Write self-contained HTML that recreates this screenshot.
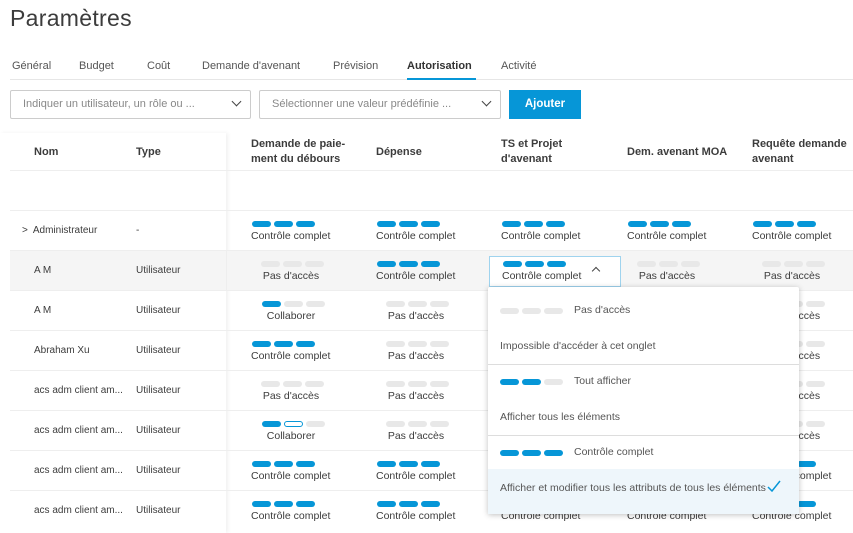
<!DOCTYPE html>
<html><head><meta charset="utf-8"><style>
*{margin:0;padding:0;box-sizing:border-box}
body{width:853px;height:529px;overflow:hidden;background:#fff;font-family:"Liberation Sans",sans-serif;color:#3c3c3c;position:relative}
.a{position:absolute;white-space:nowrap}
h1{position:absolute;left:10px;top:5px;font-weight:normal;font-size:23px;color:#3c3c3c;letter-spacing:0.3px}
.tab{position:absolute;top:60px;font-size:11px;color:#555}
.inp{position:absolute;top:90px;height:29px;border:1px solid #ccc;border-radius:2px;font-size:11px;color:#888;padding:7px 12px}
.chev{position:absolute;right:10px;top:8px;width:7px;height:7px;border-right:1.5px solid #444;border-bottom:1.5px solid #444;transform:rotate(45deg)}
.th{position:absolute;font-size:11px;font-weight:bold;color:#3c3c3c;line-height:15px}
.row{position:absolute;left:10px;width:843px;height:40px;border-top:1px solid #eee}
.nm{position:absolute;font-size:10px;color:#3c3c3c}
.c{position:absolute;width:90px;text-align:center;font-size:10.5px;color:#3c3c3c}
.p{display:inline-block;width:19px;height:6px;border-radius:3px;background:#e8e8e8;margin-right:3px;vertical-align:top}
.p.b{background:#0696d7}
.p.o{background:#fff;border:1px solid #0696d7}
.pills{height:7px;margin-bottom:2px;text-align:left}
.dd{position:absolute;left:488px;top:287px;width:311px;height:227px;background:#fff;box-shadow:0 1px 6px rgba(0,0,0,.25);border-radius:2px}
.di{position:absolute;left:12px;font-size:10.5px;color:#555}
</style></head><body>
<h1>Paramètres</h1>
<div class="tab" style="left:12px">Général</div>
<div class="tab" style="left:79px">Budget</div>
<div class="tab" style="left:147px">Coût</div>
<div class="tab" style="left:202px">Demande d'avenant</div>
<div class="tab" style="left:333px">Prévision</div>
<div class="tab" style="left:407px;font-weight:bold;color:#333">Autorisation</div>
<div class="tab" style="left:501px">Activité</div>
<div class="a" style="left:10px;top:79px;width:843px;height:1px;background:#e6e6e6"></div>
<div class="a" style="left:407px;top:78px;width:69px;height:2px;background:#0696d7"></div>
<div class="inp" style="left:10px;width:241px">Indiquer un utilisateur, un rôle ou ...<span class="chev" style="top:7px"></span></div>
<div class="inp" style="left:259px;width:242px">Sélectionner une valeur prédéfinie ...<span class="chev" style="top:7px"></span></div>
<div class="a" style="left:509px;top:90px;width:72px;height:29px;background:#0696d7;color:#fff;font-weight:bold;font-size:11.5px;text-align:center;line-height:29px">Ajouter</div>

<div class="a" style="left:0;top:133px;width:226px;height:400px;box-shadow:2px 0 4px rgba(0,0,0,.06)"></div>
<div class="th" style="left:34px;top:145px">Nom</div>
<div class="th" style="left:136px;top:145px">Type</div>
<div class="th" style="left:251px;top:137px">Demande de paie-<br>ment du débours</div>
<div class="th" style="left:376px;top:145px">Dépense</div>
<div class="th" style="left:501px;top:137px">TS et Projet<br>d'avenant</div>
<div class="th" style="left:627px;top:145px">Dem. avenant MOA</div>
<div class="th" style="left:752px;top:137px">Requête demande<br>avenant</div>

<div class="row" style="top:170px"></div>
<div class="row" style="top:210px"></div>
<div class="row" style="top:250px;background:#f5f5f5"></div>
<div class="row" style="top:290px"></div>
<div class="row" style="top:330px"></div>
<div class="row" style="top:370px"></div>
<div class="row" style="top:410px"></div>
<div class="row" style="top:450px"></div>
<div class="row" style="top:490px"></div>
<div class="a" style="left:226px;top:250px;width:1px;height:40px;background:#eee"></div>

<div class="nm" style="left:22px;top:225px">&gt;&nbsp; Administrateur</div><div class="nm" style="left:136px;top:225px">-</div>
<div class="nm" style="left:34px;top:265px">A M</div><div class="nm" style="left:136px;top:265px">Utilisateur</div>
<div class="nm" style="left:34px;top:305px">A M</div><div class="nm" style="left:136px;top:305px">Utilisateur</div>
<div class="nm" style="left:34px;top:345px">Abraham Xu</div><div class="nm" style="left:136px;top:345px">Utilisateur</div>
<div class="nm" style="left:34px;top:385px">acs adm client am...</div><div class="nm" style="left:136px;top:385px">Utilisateur</div>
<div class="nm" style="left:34px;top:425px">acs adm client am...</div><div class="nm" style="left:136px;top:425px">Utilisateur</div>
<div class="nm" style="left:34px;top:465px">acs adm client am...</div><div class="nm" style="left:136px;top:465px">Utilisateur</div>
<div class="nm" style="left:34px;top:505px">acs adm client am...</div><div class="nm" style="left:136px;top:505px">Utilisateur</div>

<div id="cells"></div>
<script>
var F='<div class="pills" style="padding-left:1px"><span class="p b"></span><span class="p b"></span><span class="p b"></span></div>Contrôle complet';
var N='<div class="pills" style="padding-left:10px"><span class="p"></span><span class="p"></span><span class="p"></span></div>Pas d\'accès';
var C='<div class="pills" style="padding-left:11px"><span class="p b"></span><span class="p"></span><span class="p"></span></div>Collaborer';
var H='<div class="pills" style="padding-left:11px"><span class="p b"></span><span class="p o"></span><span class="p"></span></div>Collaborer';
var X=[251,376,501,627,752];
var R=[[F,F,F,F,F],[N,F,null,N,N],[C,N,null,null,N],[F,N,null,null,N],[N,N,null,null,N],[H,N,null,null,N],[F,F,null,null,F],[F,F,F,F,F]];
var h='';
R.forEach(function(r,i){r.forEach(function(v,j){if(v)h+='<div class="c" style="left:'+X[j]+'px;top:'+(221+i*40)+'px;width:'+(v==F?90:80)+'px;text-align:'+(v==F?'left':'center')+'">'+v+'</div>';});});
document.getElementById('cells').innerHTML=h;
</script>
<div class="a" style="left:489px;top:256px;width:132px;height:31px;border:1px solid #9fd3ee;background:#fff"></div>
<div class="c" style="left:502px;top:261px;text-align:left"><div class="pills" style="padding-left:1px"><span class="p b"></span><span class="p b"></span><span class="p b"></span></div>Contrôle complet</div>
<div class="a" style="left:593px;top:268px;width:6px;height:6px;border-left:1.5px solid #444;border-top:1.5px solid #444;transform:rotate(45deg)"></div>

<div class="dd">
<div class="a" style="left:12px;top:21px"><span class="p"></span><span class="p"></span><span class="p"></span></div>
<div class="di" style="left:86px;top:17px">Pas d'accès</div>
<div class="di" style="top:53px">Impossible d'accéder à cet onglet</div>
<div class="a" style="left:0;top:77px;width:311px;height:1px;background:#ddd"></div>
<div class="a" style="left:12px;top:92px"><span class="p b"></span><span class="p b"></span><span class="p"></span></div>
<div class="di" style="left:86px;top:88px">Tout afficher</div>
<div class="di" style="top:124px">Afficher tous les éléments</div>
<div class="a" style="left:0;top:148px;width:311px;height:1px;background:#ddd"></div>
<div class="a" style="left:12px;top:163px"><span class="p b"></span><span class="p b"></span><span class="p b"></span></div>
<div class="di" style="left:86px;top:159px">Contrôle complet</div>
<div class="a" style="left:0;top:182px;width:311px;height:45px;background:#eef6fb"></div>
<div class="di" style="top:195px">Afficher et modifier tous les attributs de tous les éléments</div>
<svg class="a" style="left:279px;top:193px" width="14" height="12" viewBox="0 0 14 12"><path d="M1 7 L5 11 L13 1" fill="none" stroke="#0696d7" stroke-width="1.5"/></svg>
</div>
</body></html>
